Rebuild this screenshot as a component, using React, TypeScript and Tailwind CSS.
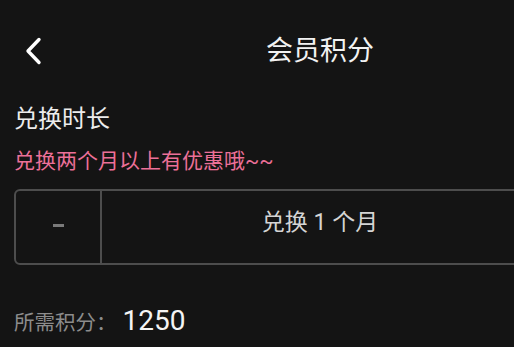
const font = { fontFamily: 'Roboto, "Noto Sans CJK SC", sans-serif' };

function BackArrow() {
    return (
        <svg className="absolute left-[11px] top-[37px]" width="17" height="28" viewBox="0 0 17 28" fill="none">
            <polyline points="14,2.5 3,14 14,25.5" stroke="#ffffff" strokeWidth="3.4" strokeLinecap="round" strokeLinejoin="round" />
        </svg>
    );
}

function PlusIcon() {
    return (
        <svg width="14" height="14" viewBox="0 0 14 14">
            <path d="M7 1v12M1 7h12" stroke="#9a9a9a" strokeWidth="2.5" />
        </svg>
    );
}

export default function App() {
    return (
        <div className="w-[514px] h-[347px] overflow-hidden bg-[#141414]" style={font}>
            <div className="w-[640px] h-[347px] bg-[#141414] px-[14px]">

                {/* header */}
                <div className="relative flex justify-center pt-[38px] h-[65px]">
                    <BackArrow />
                    <h1 className="text-[27px] leading-none text-[#f2f2f2]">会员积分</h1>
                </div>

                <h2 className="mt-[42px] text-[24px] leading-none text-[#ececec]">兑换时长</h2>
                <p className="mt-[20px] text-[21px] leading-none text-[#ec7098]">兑换两个月以上有优惠哦~~</p>

                {/* month stepper */}
                <div className="mt-[17px] flex h-[76px] rounded-md border-2 border-[#4d4d4d]">
                    <button className="flex w-[86px] items-center justify-center border-r-2 border-[#4d4d4d] pb-[3px]">
                        <span className="block h-[3px] w-[11px] bg-[#7a7a7a]" />
                    </button>
                    <div className="flex flex-1 items-center justify-center pb-[10px]">
                        <span className="text-[23px] leading-none text-[#d4d4d4]">兑换 1 个月</span>
                    </div>
                    <button className="flex w-[86px] items-center justify-center border-l-2 border-[#4d4d4d] pb-[3px]">
                        <PlusIcon />
                    </button>
                </div>

                <div className="mt-[42px] flex items-baseline">
                    <span className="text-[20.5px] leading-none text-[#8c8c8c]">所需积分：</span>
                    <span className="ml-[6px] text-[28px] leading-none text-[#f4f4f4]">1250</span>
                </div>
            </div>
        </div>
    );
}
